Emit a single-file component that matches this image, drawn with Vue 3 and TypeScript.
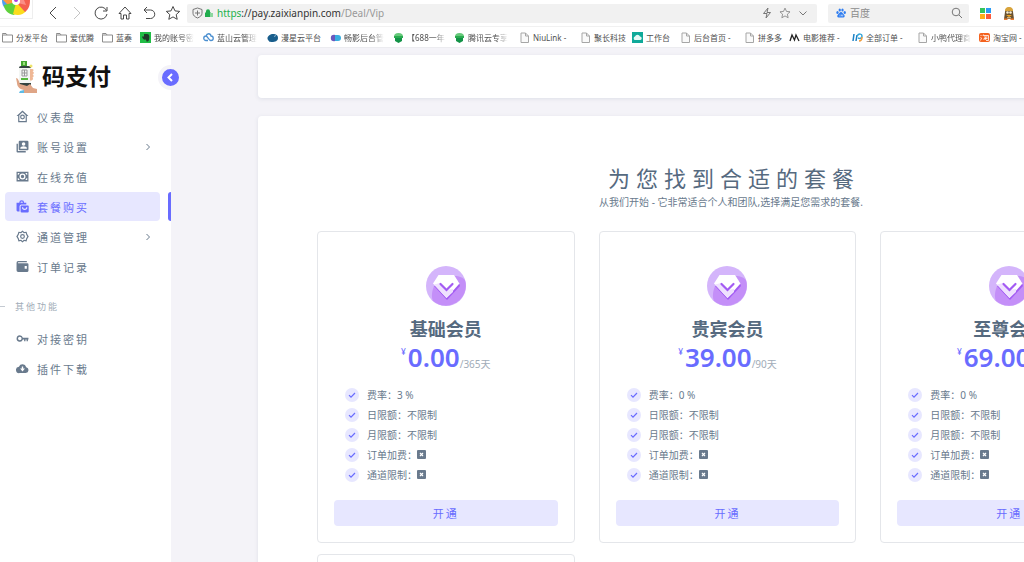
<script setup lang="ts">
import { ref } from 'vue'

interface MenuItem {
  label: string
  icon: string
  expandable?: boolean
}

interface Plan {
  name: string
  price: string
  days: number
  rate: number
}

interface Bookmark {
  label: string
  icon: string
  faded?: boolean
}

const icons: Record<string, string> = {
  home: 'M12 1 1 11h3v11.500h16V11h3zM17.800 20.300H6.200V9.500L12 4.200l5.800 5.300zM12 8.500a4.500 4.500 0 1 0 0 9 4.500 4.500 0 0 0 0-9zm0 2.200a2.300 2.300 0 1 1 0 4.600 2.300 2.300 0 0 1 0-4.600z',
  account: 'M1 7h2.500v13.500H18V23H3a2 2 0 0 1-2-2zM7 1.500h14a2 2 0 0 1 2 2V17a2 2 0 0 1-2 2H7a2 2 0 0 1-2-2V3.500a2 2 0 0 1 2-2zM14 4a3.300 3.300 0 1 0 0 6.600A3.300 3.300 0 0 0 14 4zM8 16h12v-1c0-2.300-3-3.600-6-3.600S8 12.700 8 15z',
  money: 'M1 3h22v18H1zM6.500 5.500H3.300v3.700a4 4 0 0 0 3.200-3.700zM3.300 14.800v3.700h3.200a4 4 0 0 0-3.200-3.700zM17.500 18.500h3.200v-3.700a4 4 0 0 0-3.200 3.700zM20.700 9.200V5.500h-3.200a4 4 0 0 0 3.200 3.700zM12 6.500a5.500 5.500 0 1 0 0 11 5.500 5.500 0 0 0 0-11zm0 2.400a3.100 3.100 0 1 1 0 6.200 3.100 3.100 0 0 1 0-6.200z',
  bags: 'M6 5a4.500 4.500 0 0 1 9 0h4v3.500H10A3.500 3.500 0 0 0 6.500 12v9H3a2 2 0 0 1-2-2V5zM8.300 5h4.400a2.200 2.200 0 0 0-4.400 0zM10 10h12a1.500 1.500 0 0 1 1.500 1.500V21a2 2 0 0 1-2 2h-11a2 2 0 0 1-2-2v-9.500A1.500 1.500 0 0 1 10 10zM11 13.500a5 5 0 0 0 10 0h-2.200a2.800 2.800 0 0 1-5.600 0z',
  cog: 'M12 .8 15.200 3.500 19.500 3 20.700 7.200 23.500 12 20.700 16.800 19.500 21 15.200 20.500 12 23.200 8.800 20.500 4.500 21 3.300 16.800.5 12 3.300 7.200 4.500 3 8.800 3.500zM12 3.700 9.600 5.800 6 5.500 5.300 8.500 3.200 12l2.100 3.500.7 3 3.600-.3 2.400 2.100 2.400-2.100 3.600.3.700-3 2.100-3.500-2.100-3.500-.7-3-3.600.3zM12 7.500a4.500 4.500 0 1 1 0 9 4.500 4.500 0 0 1 0-9zm0 2.200a2.300 2.300 0 1 0 0 4.600 2.300 2.300 0 0 0 0-4.600z',
  wallet: 'M4 2h16v2H4.500a1 1 0 0 0 0 2H21a2 2 0 0 1 2 2v12a2 2 0 0 1-2 2H4a3 3 0 0 1-3-3V5a3 3 0 0 1 3-3zM16 11v5h4v-5z',
  key: 'M7 6a6 6 0 1 0 5.700 8H15v3h2.500v-3h2v3H22v-3h1v-3.500H12.700A6 6 0 0 0 7 6zm0 2.700a3.300 3.300 0 1 1 0 6.600 3.300 3.300 0 0 1 0-6.600z',
  cloud: 'M18.900 9.500A7.200 7.200 0 0 0 5.400 8.600 5.800 5.800 0 0 0 6.500 20.500H18a5.600 5.600 0 0 0 .9-11zM10.700 8.500h2.600V12h3.200L12 17.500 7.500 12h3.200z'
}

const mainMenu: MenuItem[] = [
  { label: '仪表盘', icon: 'home' },
  { label: '账号设置', icon: 'account', expandable: true },
  { label: '在线充值', icon: 'money' },
  { label: '套餐购买', icon: 'bags' },
  { label: '通道管理', icon: 'cog', expandable: true },
  { label: '订单记录', icon: 'wallet' }
]

const extraMenu: MenuItem[] = [
  { label: '对接密钥', icon: 'key' },
  { label: '插件下载', icon: 'cloud' }
]

const plans: Plan[] = [
  { name: '基础会员', price: '0.00', days: 365, rate: 3 },
  { name: '贵宾会员', price: '39.00', days: 90, rate: 0 },
  { name: '至尊会员', price: '69.00', days: 365, rate: 0 }
]

const bookmarks: Bookmark[] = [
  { label: '分发平台', icon: 'folder' },
  { label: '爱优腾', icon: 'folder' },
  { label: '蓝奏', icon: 'folder' },
  { label: '我的账号密', icon: 'note', faded: true },
  { label: '蓝山云管理', icon: 'link', faded: true },
  { label: '漫星云平台', icon: 'planet' },
  { label: '畅影后台管', icon: 'dots', faded: true },
  { label: '【688一年', icon: 'shield', faded: true },
  { label: '腾讯云专享', icon: 'shield', faded: true },
  { label: 'NiuLink -', icon: 'page' },
  { label: '聚长科技', icon: 'page' },
  { label: '工作台', icon: 'desk' },
  { label: '后台首页 -', icon: 'page' },
  { label: '拼多多', icon: 'page' },
  { label: '电影推荐 -', icon: 'film' },
  { label: '全部订单 -', icon: 'order' },
  { label: '小鸭代理商', icon: 'page', faded: true },
  { label: '淘宝网 -', icon: 'tao' }
]

const active = ref('套餐购买')
const query = ref('')
</script>

<template>
  <div class="window">
    <header class="chrome">
      <div class="toolbar">
        <div class="brand">
          <svg width="32" height="18" viewBox="0 0 32 18" aria-hidden="true">
            <path d="M16 2 5 0H2c0 4 1 7 4 9z" fill="#4f9df0" />
            <path d="M3 0h12v3L8 5z" fill="#ff9a3d" />
            <path d="M16 2 4 5c0 5 4 9 10 10l5-6z" fill="#5fd13c" />
            <path d="M16 3 13 14c5 2 10 1 13-3l-3-7z" fill="#fbdc1c" />
            <path d="M16 2 25 12c4-3 5-7 5-12H19z" fill="#f4604f" />
            <path d="M17 0h7l2 5-8-2z" fill="#fb8e86" />
            <circle cx="16" cy="1" r="4" fill="#fff" />
            <circle cx="16" cy="0" r="2" fill="#b03be0" />
          </svg>
        </div>
        <button class="tool" aria-label="后退"><svg width="16" height="16" viewBox="0 0 16 16"><path d="M11 2 5 8l6 6" /></svg></button>
        <button class="tool dim" aria-label="前进"><svg width="16" height="16" viewBox="0 0 16 16"><path d="m5 2 6 6-6 6" /></svg></button>
        <button class="tool" aria-label="刷新"><svg width="16" height="16" viewBox="0 0 16 16"><path d="M13.500 5.500A6 6 0 1 0 14 9M14 2v4h-4" /></svg></button>
        <button class="tool" aria-label="主页"><svg width="16" height="16" viewBox="0 0 16 16"><path d="M2 8.500 8 2l6 6.500h-2V14H9.500v-4h-3v4H4V8.500z" /></svg></button>
        <button class="tool" aria-label="恢复"><svg width="16" height="16" viewBox="0 0 16 16"><path d="M6 2 3 5l3 3M3 5h6.500a4.200 4.200 0 0 1 0 8.500H5" /></svg></button>
        <button class="tool" aria-label="收藏"><svg width="16" height="16" viewBox="0 0 16 16"><path d="m8 1.500 2 4.400 4.700.5-3.500 3.200 1 4.700L8 11.900l-4.200 2.400 1-4.700L1.300 6.400 6 5.900z" /></svg></button>
        <div class="address">
          <svg class="line" width="11" height="12" viewBox="0 0 11 12" aria-hidden="true"><path d="M5.500 1 10 2.500v3.800c0 2.200-2 3.700-4.500 4.700C3 10 1 8.500 1 6.300V2.500zM5.500 3.500v5M3 6h5" /></svg>
          <svg width="9" height="10" viewBox="0 0 9 10" aria-hidden="true"><path d="M1 4.500h1V3.300a2 2 0 0 1 4 0v1.200h1V9H1z" fill="#22ad4e" /><path d="M6 5h3v4H6z" fill="#8bd79f" /></svg>
          <div class="url" role="textbox" aria-label="地址" tabindex="0"><span class="scheme">https</span>://pay.zaixianpin.com<span class="path">/Deal/Vip</span></div>
          <svg class="line" width="10" height="12" viewBox="0 0 10 12" aria-hidden="true"><path d="M6 1 1.500 6.500H5L4 11l4.500-5.500H5z" /></svg>
          <svg class="line" width="12" height="12" viewBox="0 0 16 16" aria-hidden="true"><path d="m8 1.500 2 4.400 4.700.5-3.500 3.200 1 4.700L8 11.900l-4.200 2.400 1-4.700L1.300 6.400 6 5.900z" /></svg>
          <svg class="line" width="10" height="12" viewBox="0 0 10 12" aria-hidden="true"><path d="m1.500 4.500 3.500 3.500 3.500-3.500" /></svg>
        </div>
        <label class="search">
          <svg width="10" height="10" viewBox="0 0 20 20" aria-hidden="true" fill="#2f7df0">
            <ellipse cx="3" cy="9" rx="2.300" ry="3" /><ellipse cx="7.500" cy="4" rx="2.300" ry="3.200" /><ellipse cx="13" cy="4" rx="2.300" ry="3.200" /><ellipse cx="17.500" cy="9" rx="2.300" ry="3" />
            <path d="M10 8c3 0 3.500 3 6 5s1.500 6-1.500 6h-9C2 19 1.500 15 4 13s3-5 6-5z" />
            <path d="M8 13v4M11 13v3h2.500v-3" stroke="#fff" fill="none" />
          </svg>
          <input v-model="query" type="text" placeholder="百度" aria-label="百度" />
          <svg class="line" width="12" height="12" viewBox="0 0 12 12" aria-hidden="true"><circle cx="5" cy="5" r="3.800" /><path d="m8 8 3 3" /></svg>
        </label>
        <button class="app" aria-label="应用">
          <svg width="11" height="11" viewBox="0 0 11 11"><path d="M0 0h5v5H0z" fill="#35c35b" /><path d="M6 0h5v5H6z" fill="#2a9bf5" /><path d="M0 6h5v5H0z" fill="#ffae1a" /><path d="M6 6h5v5H6z" fill="#fb5a3c" /></svg>
        </button>
        <button class="app" aria-label="用户">
          <svg width="12" height="13" viewBox="0 0 12 13"><path d="M1 12 2 5a4 4.500 0 0 1 8 0l1 7z" fill="#6a5230" /><path d="M2 4a4 4 0 0 1 8 0z" fill="#d9a43a" /><circle cx="4.500" cy="5.500" r="1.300" fill="#f6ecd0" /><circle cx="7.500" cy="5.500" r="1.300" fill="#f6ecd0" /><path d="M3 8h6l-3 2z" fill="#f3a51c" /><path d="M4 10h4v1.500H4z" fill="#c9b184" /><path d="M1 11.500h3.500V13H1zM7.500 11.500H11V13H7.500z" fill="#f07d31" /></svg>
        </button>
      </div>
      <nav class="bookmarks" aria-label="书签">
        <a v-for="(b, i) in bookmarks" :key="i" href="#" class="bookmark" :class="{ faded: b.faded }">
          <svg width="11" height="11" viewBox="0 0 11 11" aria-hidden="true">
            <path v-if="b.icon === 'folder'" d="M.5 2.500V1.500H4l1 1.500h5.500v7H.5zM.5 3H5" fill="none" stroke="#8c8c8c" />
            <path v-else-if="b.icon === 'page'" d="M2 1h4.500L9.500 4v6.500H2zM6.500 1v3h3" fill="#fafafa" stroke="#a6a6a6" />
            <g v-else-if="b.icon === 'note'"><path d="M0 0h11v11H0z" fill="#21bd46" /><path d="M4 2h3c2 0 2.500 1 2.300 4-.2 3-1 3.500-2.800 3.500L6 7.500C4 8 2.500 7 2 4.500h2z" fill="#20392a" /></g>
            <path v-else-if="b.icon === 'link'" d="M5 8.500H3a2.200 2.200 0 0 1 0-4.500c1.500 0 3 4.500 5 4.500a2.200 2.200 0 0 0 0-4.500C7.500 1 4 1 3 4" fill="none" stroke="#4b8fd0" stroke-width="1.300" />
            <g v-else-if="b.icon === 'planet'"><path d="M1 8C-1 5 3 2 6 2s5 1 5 4-3 4-6 4-3-1-4-2z" fill="#195e8c" /><path d="M7 4.500 9 3.500" fill="none" stroke="#8fb7cf" /></g>
            <g v-else-if="b.icon === 'dots'"><circle cx="4" cy="6" r="3.200" fill="#6a58bd" /><path d="M5 3h3a3 3 0 0 1 0 6H5z" fill="#38aee0" /></g>
            <g v-else-if="b.icon === 'shield'"><path d="M1 4.500a4.500 3.500 0 0 1 9 0z" fill="#65c97a" /><path d="M2 5h7v4l-3.500 2L2 9z" fill="#139347" /><path d="M1 4h9v2H1z" fill="#2aac50" /></g>
            <g v-else-if="b.icon === 'desk'"><path d="M0 0h11v11H0z" fill="#0fa999" /><path d="M2.500 8a2 2 0 0 1 .5-3.500 2.700 2.700 0 0 1 5 0A1.800 1.800 0 0 1 8.500 8z" fill="#e6f8f5" /></g>
            <path v-else-if="b.icon === 'film'" d="M1 9 3 3l2.500 5L7 3l3 6" fill="none" stroke="#222" stroke-width="1.300" />
            <g v-else-if="b.icon === 'order'" fill="none" stroke-width="1.500"><path d="M2 2 1 9M4 9l1-6" stroke="#1d82c5" /><path d="M5 4c2-3 5-2 5 0S8 7 6 6" stroke="#33a5d8" /><path d="M7 9c2 0 3-2 3-4" stroke="#f29b3a" /></g>
            <g v-else><rect y="1" width="11" height="9" rx="2" fill="#f4621f" /><path d="m1.500 3 1 1M1.500 5.500l1 .5-1 2.500M4.500 2.500 4 4M4.500 3.500H9.500v5H7M5 5h3.500M5 6.500h3.500M5 8V6.500M6.700 5v3" fill="none" stroke="#fff" stroke-width=".8" /></g>
          </svg>
          <span>{{ b.label }}</span>
        </a>
      </nav>
    </header>

    <div class="page">
      <aside class="sidebar">
        <a href="#" class="logo">
          <svg width="24" height="34" viewBox="0 0 24 34" aria-hidden="true">
            <path d="M6 1h6v6H6z" fill="#45a832" /><path d="M8 2h2v3H8z" fill="#9be07c" />
            <rect x="4" y="6" width="12" height="20" rx="2" fill="#34433f" />
            <path d="M4 8h12v15H4z" fill="#f4f6f3" />
            <path d="M7 10h5v6H7zM7 13h5M9.500 10v6" fill="none" stroke="#999" />
            <path d="M6 18h7v2H6z" fill="#55b83c" />
            <path d="M15 9h2c2 0 2 2 .5 2.500 2 .5 1.500 2.500 0 3 1.500.5 1.500 2.500 0 3 1 1 .5 2.500-1 3H15z" fill="#efb795" />
            <path d="M1 18c2 0 3 3 4 6l7 2 3-2 3 4 4 1v4H8l1-3C4 29 2 26 2 23z" fill="#dfa586" />
            <path d="m5 31 4-1v3H4z" fill="#5dbbe6" /><circle cx="16" cy="6" r="1.500" fill="#efe469" />
          </svg>
          <span>码支付</span>
        </a>
        <button class="collapse" aria-label="收起菜单"><svg width="17" height="17" viewBox="0 0 17 17"><path d="m10 5-3.500 3.500L10 12" /></svg></button>
        <nav class="menu" aria-label="主菜单">
          <a v-for="m in mainMenu" :key="m.label" href="#" class="item" :class="{ active: m.label === active }" @click.prevent="active = m.label">
            <svg width="13" height="13" viewBox="0 0 24 24" aria-hidden="true"><path :d="icons[m.icon]" fill="currentColor" fill-rule="evenodd" /></svg>
            <span>{{ m.label }}</span>
            <svg v-if="m.expandable" class="arrow" width="8" height="8" viewBox="0 0 8 8" aria-hidden="true"><path d="m2.500 1 3 3-3 3" /></svg>
          </a>
        </nav>
        <h2 class="section">其他功能</h2>
        <nav class="menu" aria-label="其他功能">
          <a v-for="m in extraMenu" :key="m.label" href="#" class="item" :class="{ active: m.label === active }" @click.prevent="active = m.label">
            <svg width="13" height="13" viewBox="0 0 24 24" aria-hidden="true"><path :d="icons[m.icon]" fill="currentColor" fill-rule="evenodd" /></svg>
            <span>{{ m.label }}</span>
          </a>
        </nav>
      </aside>

      <main class="content">
        <div class="panel strip"></div>
        <section class="panel pricing">
          <h1>为您找到合适的套餐</h1>
          <p class="lead">从我们开始 - 它非常适合个人和团队,选择满足您需求的套餐.</p>
          <div class="plans">
            <article v-for="p in plans" :key="p.name" class="plan">
              <svg class="gem" width="40" height="40" viewBox="0 0 40 40" aria-hidden="true">
                <circle cx="20" cy="20" r="20" fill="#d4b5fb" />
                <path d="M28 10c6 0 9 2 11 4A20 20 0 0 1 7 35C5 31 6 25 8 20z" fill="#c48ff8" />
                <path d="m32 15 2 5-13 14L8 20z" fill="#a35bf3" />
                <path d="M12.500 9h15.500L33.500 17.500 20.500 32 7 17.500z" fill="#fff" />
                <path d="M8 18.500l6-1.500 6.500 7 6.500-1v3L20.500 32z" fill="#efe1fe" />
                <path d="m14.500 18 6 6 6-6" fill="none" stroke="#a35bf3" stroke-width="2.200" stroke-linecap="round" />
              </svg>
              <h3>{{ p.name }}</h3>
              <p class="price"><sup>¥</sup><strong>{{ p.price }}</strong><small>/{{ p.days }}天</small></p>
              <ul>
                <li><i class="tick"><svg width="14" height="14" viewBox="0 0 14 14"><path d="m4 7.200 2 2L10 5" /></svg></i>费率：{{ p.rate }} %</li>
                <li><i class="tick"><svg width="14" height="14" viewBox="0 0 14 14"><path d="m4 7.200 2 2L10 5" /></svg></i>日限额：不限制</li>
                <li><i class="tick"><svg width="14" height="14" viewBox="0 0 14 14"><path d="m4 7.200 2 2L10 5" /></svg></i>月限额：不限制</li>
                <li v-for="t in ['订单加费：', '通道限制：']" :key="t">
                  <i class="tick"><svg width="14" height="14" viewBox="0 0 14 14"><path d="m4 7.200 2 2L10 5" /></svg></i>{{ t }}
                  <svg class="cross" width="9" height="9" viewBox="0 0 9 9" role="img" aria-label="无"><rect width="9" height="9" rx="1" fill="#697a8d" /><path d="m3 3 3 3M6 3 3 6" stroke="#fff" stroke-width="1.200" /></svg>
                </li>
              </ul>
              <button class="buy">开通</button>
            </article>
            <article class="plan"></article>
          </div>
        </section>
      </main>
    </div>
  </div>
</template>

<style>
body {
  margin: 0;
  overflow: hidden;
}
</style>

<style scoped>
.window {
  display: flex;
  flex-direction: column;
  height: 100vh;
  overflow: hidden;
  background: #f4f3f8;
  color: #697a8d;
  font-family: "Noto Sans", "Noto Sans CJK SC", sans-serif;
  font-size: 10px;
}
button {
  border: 0;
  padding: 0;
  background: none;
  font: inherit;
  color: inherit;
  cursor: pointer;
}
a {
  color: inherit;
  text-decoration: none;
}
svg {
  flex: none;
  display: block;
}
.chrome {
  flex: none;
  background: #fff;
  border-bottom: 1px solid #ececf0;
}
.toolbar {
  display: flex;
  align-items: center;
  height: 26px;
  border-bottom: 1px solid #f1f1f1;
}
.brand {
  align-self: flex-start;
  width: 32px;
  margin-right: 8px;
  border: 1px solid #eee;
  border-top: 0;
  border-left: 0;
}
.tool {
  display: flex;
  flex: none;
  justify-content: center;
  width: 24px;
  color: #484848;
}
.tool svg {
  fill: none;
  stroke: currentColor;
}
.dim {
  color: #c4c4c4;
}
.address {
  display: flex;
  flex: 1;
  align-items: center;
  gap: 7px;
  height: 19px;
  margin: 0 11px 0 2px;
  padding: 0 9px 0 5px;
  background: #f1f1f1;
  border-radius: 2px;
}
.address > svg:nth-of-type(2) {
  margin: 0 -3px 0 -6px;
}
.line {
  fill: none;
  stroke: #777;
}
.url {
  flex: 1;
  font-size: 10px;
  color: #333;
  white-space: nowrap;
}
.scheme {
  color: #22b24c;
}
.path {
  color: #999;
}
.search {
  display: flex;
  align-items: center;
  gap: 4px;
  box-sizing: border-box;
  width: 141px;
  height: 19px;
  padding: 0 6px 0 8px;
  background: #f1f1f1;
  border-radius: 2px;
}
.search input {
  flex: 1;
  min-width: 0;
  padding: 0;
  border: 0;
  outline: 0;
  background: none;
  font: inherit;
}
.search input::placeholder {
  color: #8c8c8c;
}
.app {
  display: flex;
  justify-content: center;
  width: 24px;
}
.app:nth-last-child(2) {
  margin-left: 4px;
}
.app:last-child {
  margin-right: 3px;
}
.bookmarks {
  display: grid;
  grid-template-columns: 54px 46px 38px 63px 64px 63px 63px 61px 65px 61px 52px 48px 64px 45px 63px 65px 62px 44px;
  align-items: center;
  height: 20px;
  padding-left: 2px;
  color: #505050;
  font-size: 8px;
}
.bookmark {
  display: flex;
  align-items: center;
  gap: 3px;
  white-space: nowrap;
}
.faded span {
  width: 40px;
  overflow: hidden;
  mask-image: linear-gradient(to right, #000 70%, transparent);
}
.page {
  display: flex;
  flex: 1;
  min-height: 0;
}
.sidebar {
  position: relative;
  flex: none;
  width: 171px;
  background: #fff;
}
.logo {
  display: flex;
  align-items: center;
  gap: 3px;
  height: 34px;
  padding: 12px 0 8px 15px;
  color: #111;
  font-size: 23px;
  font-weight: 700;
  line-height: 30px;
}
.logo span {
  padding-bottom: 3px;
}
.collapse {
  position: absolute;
  top: 17px;
  right: -12px;
  border: 4px solid #f4f3f8;
  border-radius: 50%;
  background: #696cff;
}
.collapse path {
  fill: none;
  stroke: #fff;
  stroke-width: 2;
}
.menu {
  display: flex;
  flex-direction: column;
  gap: 1px;
}
.item {
  position: relative;
  display: flex;
  align-items: center;
  gap: 8px;
  height: 29px;
  margin: 0 11px 0 5px;
  padding: 0 8px 0 11px;
  border-radius: 4px;
  font-size: 11px;
  letter-spacing: 2px;
}
.arrow {
  margin-left: auto;
  fill: none;
  stroke: currentColor;
}
.active {
  background: #e7e7ff;
  color: #696cff;
}
.active::after {
  content: "";
  position: absolute;
  top: 0;
  right: -11px;
  width: 3px;
  height: 29px;
  border-radius: 3px 0 0 3px;
  background: #696cff;
}
.section {
  display: flex;
  align-items: center;
  gap: 10px;
  height: 16px;
  margin: 17px 0 10px;
  color: #a1acb8;
  font-size: 9px;
  font-weight: 400;
  letter-spacing: 2px;
}
.section::before {
  content: "";
  width: 5px;
  height: 1px;
  background: #c4cad2;
}
.content {
  flex: 1;
  min-width: 0;
  padding: 7px 87px 0;
  overflow: hidden;
}
.panel {
  box-sizing: border-box;
  min-width: 946px;
  background: #fff;
  border-radius: 4px;
  box-shadow: 0 1px 4px rgba(67, 89, 113, 0.12);
}
.strip {
  height: 43px;
  margin-bottom: 18px;
}
.pricing {
  padding: 46px 59px;
  text-align: center;
}
h1 {
  margin: 0;
  color: #566a7f;
  font-size: 22px;
  font-weight: 400;
  line-height: 32px;
  letter-spacing: 6px;
  text-indent: 6px;
}
.lead {
  margin: 0 0 21px;
  line-height: 16px;
}
.plans {
  display: grid;
  grid-template-columns: repeat(3, 1fr);
  gap: 11px 24px;
  padding-right: 7px;
}
.plan {
  display: flex;
  flex-direction: column;
  align-items: center;
  padding: 34px 16px 16px;
  border: 1px solid #e4e6ea;
  border-radius: 4px;
}
h3 {
  margin: 10px 0 0;
  color: #566a7f;
  font-size: 18px;
  font-weight: 700;
  line-height: 26px;
}
.price {
  display: flex;
  align-items: flex-end;
  height: 30px;
  margin: 0;
  color: #696cff;
}
.price sup {
  align-self: flex-start;
  margin-right: 2px;
  line-height: 20px;
}
.price strong {
  font-size: 26px;
  font-weight: 600;
  line-height: 30px;
}
.price small {
  color: #a1acb8;
  font-size: 10px;
  line-height: 16px;
}
ul {
  display: flex;
  flex-direction: column;
  align-self: stretch;
  gap: 5px;
  margin: 15px 0 18px;
  padding: 0 11px;
  list-style: none;
}
li {
  display: flex;
  align-items: center;
  height: 15px;
}
.tick {
  margin-right: 8px;
  border-radius: 50%;
  background: #e7e7ff;
}
.tick path {
  fill: none;
  stroke: #696cff;
  stroke-width: 1.2;
}
.buy {
  align-self: stretch;
  height: 26px;
  border-radius: 4px;
  background: #e7e7ff;
  color: #696cff;
  font-size: 11px;
  letter-spacing: 2px;
}
</style>
